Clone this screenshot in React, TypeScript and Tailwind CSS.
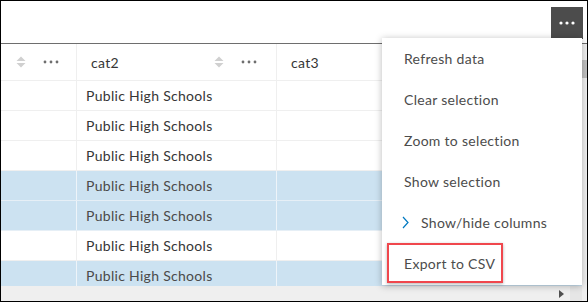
import React from "react";

const font = { fontFamily: '"Lato", "Open Sans", sans-serif' };

function SortIcon() {
  return (
    <svg width="10" height="12" viewBox="0 0 10 12" className="shrink-0">
      <path d="M0.5 5 L5 0.5 L9.5 5 Z" fill="#d0d0d0" />
      <path d="M0.5 7 L5 11.5 L9.5 7 Z" fill="#d0d0d0" />
    </svg>
  );
}

function Dots({ color = "#6e6e6e" }: { color?: string }) {
  return (
    <svg width="16" height="4" viewBox="0 0 16 4" className="shrink-0">
      <circle cx="2" cy="2" r="1.4" fill={color} />
      <circle cx="8" cy="2" r="1.4" fill={color} />
      <circle cx="14" cy="2" r="1.4" fill={color} />
    </svg>
  );
}

const rows = [false, false, false, true, true, false, true];

export default function App() {
  return (
    <div
      className="relative w-[588px] h-[302px] border border-black bg-white overflow-hidden flex flex-col text-[14px] tracking-[0.3px] text-[#363636]"
      style={font}
    >
      {/* top bar */}
      <div className="h-[42px] shrink-0 flex justify-end items-start pt-[6px] pr-[4px]">
        <div className="w-[32px] h-[32px] bg-[#4c4c4c] flex items-center justify-center">
          <svg width="16" height="4" viewBox="0 0 16 4">
            <circle cx="2" cy="2" r="1.6" fill="#ffffff" />
            <circle cx="8" cy="2" r="1.6" fill="#ffffff" />
            <circle cx="14" cy="2" r="1.6" fill="#ffffff" />
          </svg>
        </div>
      </div>
      <div className="h-px shrink-0 bg-[#6e6e6e]" />

      {/* body */}
      <div className="flex-1 flex min-h-0">
        <div className="flex-1 flex flex-col min-w-0 overflow-hidden">
          {/* header */}
          <div className="h-[37px] shrink-0 flex border-b border-[#efefef]">
            <div className="w-[76px] shrink-0 flex items-center pl-[15px] gap-[17px] border-r border-[#efefef]">
              <SortIcon />
              <Dots />
            </div>
            <div className="w-[200px] shrink-0 flex items-center pl-[14px] border-r border-[#efefef]">
              <span className="flex-1">cat2</span>
              <div className="flex items-center gap-[17px] pr-[19px]">
                <SortIcon />
                <Dots />
              </div>
            </div>
            <div className="flex-1 flex items-center pl-[14px]">cat3</div>
          </div>
          {rows.map((sel, i) => (
            <div
              key={i}
              className={`h-[30px] shrink-0 flex border-b ${
                sel ? "bg-[#cce2f1] border-[#e6eff6]" : "bg-white border-[#efefef]"
              }`}
            >
              <div
                className={`w-[76px] shrink-0 border-r ${
                  sel ? "border-[#eef4f9]" : "border-[#efefef]"
                }`}
              />
              <div
                className={`w-[200px] shrink-0 flex items-center pl-[9px] border-r ${
                  sel ? "border-[#eef4f9] text-[#4a4a4a]" : "border-[#efefef]"
                }`}
              >
                Public High Schools
              </div>
              <div className="flex-1" />
            </div>
          ))}
        </div>
        {/* vertical scrollbar */}
        <div className="w-[5px] shrink-0 bg-[#f0f0f0] flex flex-col">
          <div className="h-[16px]" />
          <div className="h-[18px] bg-[#c1c1c1]" />
        </div>
      </div>

      {/* horizontal scrollbar */}
      <div className="h-[15px] shrink-0 bg-[#efefef] flex items-center">
        <div className="flex-1" />
        <svg width="5" height="8" viewBox="0 0 5 8" className="mr-[6px]">
          <path d="M0 0 L5 4 L0 8 Z" fill="#505050" />
        </svg>
        <div className="w-[12px] h-full bg-[#e6e6e6]" />
        <div className="w-[5px] h-full bg-[#efefef]" />
      </div>

      {/* dropdown menu */}
      <div className="absolute left-[381px] top-[37px] w-[200px] h-[247px] bg-white shadow-[0_1px_7px_rgba(0,0,0,0.28)] flex flex-col text-[#4c4c4c]">
        {[
          "Refresh data",
          "Clear selection",
          "Zoom to selection",
          "Show selection",
        ].map((t) => (
          <div key={t} className="h-[41px] flex items-center pl-[22px]">
            {t}
          </div>
        ))}
        <div className="h-[41px] flex items-center pl-[20px] gap-[12px]">
          <svg width="7" height="13" viewBox="0 0 7 13">
            <path d="M1 1 L6 6.5 L1 12" fill="none" stroke="#0079c1" strokeWidth="1.2" />
          </svg>
          <span>Show/hide columns</span>
        </div>
        <div className="h-[41px] flex items-center pl-[22px]">Export to CSV</div>
      </div>

      {/* annotation box */}
      <div className="absolute left-[386px] top-[242px] w-[116px] h-[40px] border-2 border-[#f0474d] shadow-[0_1px_3px_rgba(0,0,0,0.3)]" />
    </div>
  );
}
